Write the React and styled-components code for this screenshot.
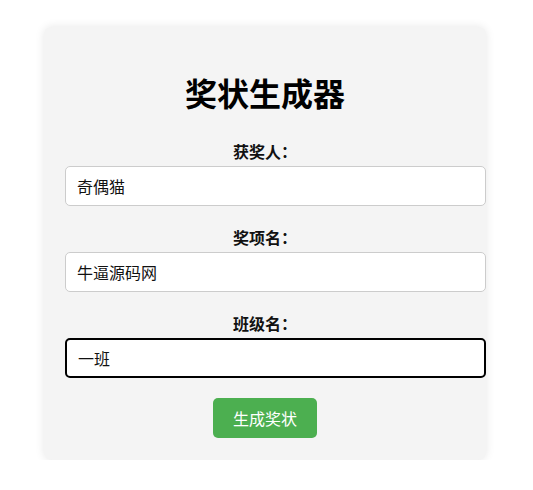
import React from 'react'
import styled, { createGlobalStyle } from 'styled-components'

const GlobalStyle = createGlobalStyle`
  body {
    margin: 0;
    background: #fff;
    font-family: "Noto Sans CJK SC", "Noto Sans", sans-serif;
  }
`

const Page = styled.div`
  display: flex;
  justify-content: center;
  padding-top: 27px;
`

const Card = styled.div`
  box-sizing: border-box;
  width: 442px;
  margin-left: -3px;
  padding: 21px 0 22px 21px;
  background: #f4f4f4;
  border-radius: 8px;
  box-shadow: 0 0 10px rgba(0, 0, 0, 0.1);
  display: flex;
  flex-direction: column;
`

const Title = styled.h1`
  margin: 21px 0 25px;
  padding-right: 21px;
  font-size: 32px;
  line-height: 46px;
  font-weight: 700;
  text-align: center;
  color: #000;
`

const Field = styled.div`
  display: flex;
  flex-direction: column;
  margin-bottom: 20px;
`

const Label = styled.label`
  display: block;
  padding-right: 21px;
  margin-bottom: 3px;
  font-size: 16px;
  line-height: 23px;
  font-weight: 700;
  text-align: center;
  color: #111;
`

const Input = styled.input`
  box-sizing: border-box;
  width: 421px;
  height: 40px;
  padding: 0 11px;
  font-family: "Noto Sans CJK SC", sans-serif;
  font-size: 16px;
  color: #111;
  background: #fff;
  border: ${p => (p.$focused ? '2px solid #000' : '1px solid #ccc')};
  border-radius: 5px;
  outline: none;
`

const Button = styled.button`
  align-self: center;
  margin: 0 21px 0 0;
  width: 104px;
  height: 40px;
  font-family: "Noto Sans CJK SC", sans-serif;
  font-size: 16px;
  color: #fff;
  background: #4caf50;
  border: none;
  border-radius: 5px;
  cursor: pointer;
`

const fields = [
  { label: '获奖人：', value: '奇偶猫' },
  { label: '奖项名：', value: '牛逼源码网' },
  { label: '班级名：', value: '一班', focused: true }
]

export default function App() {
  return (
    <>
      <GlobalStyle />
      <Page>
        <Card>
          <Title>奖状生成器</Title>
          {fields.map(f => (
            <Field key={f.label}>
              <Label>{f.label}</Label>
              <Input defaultValue={f.value} $focused={f.focused} />
            </Field>
          ))}
          <Button>生成奖状</Button>
        </Card>
      </Page>
    </>
  )
}
